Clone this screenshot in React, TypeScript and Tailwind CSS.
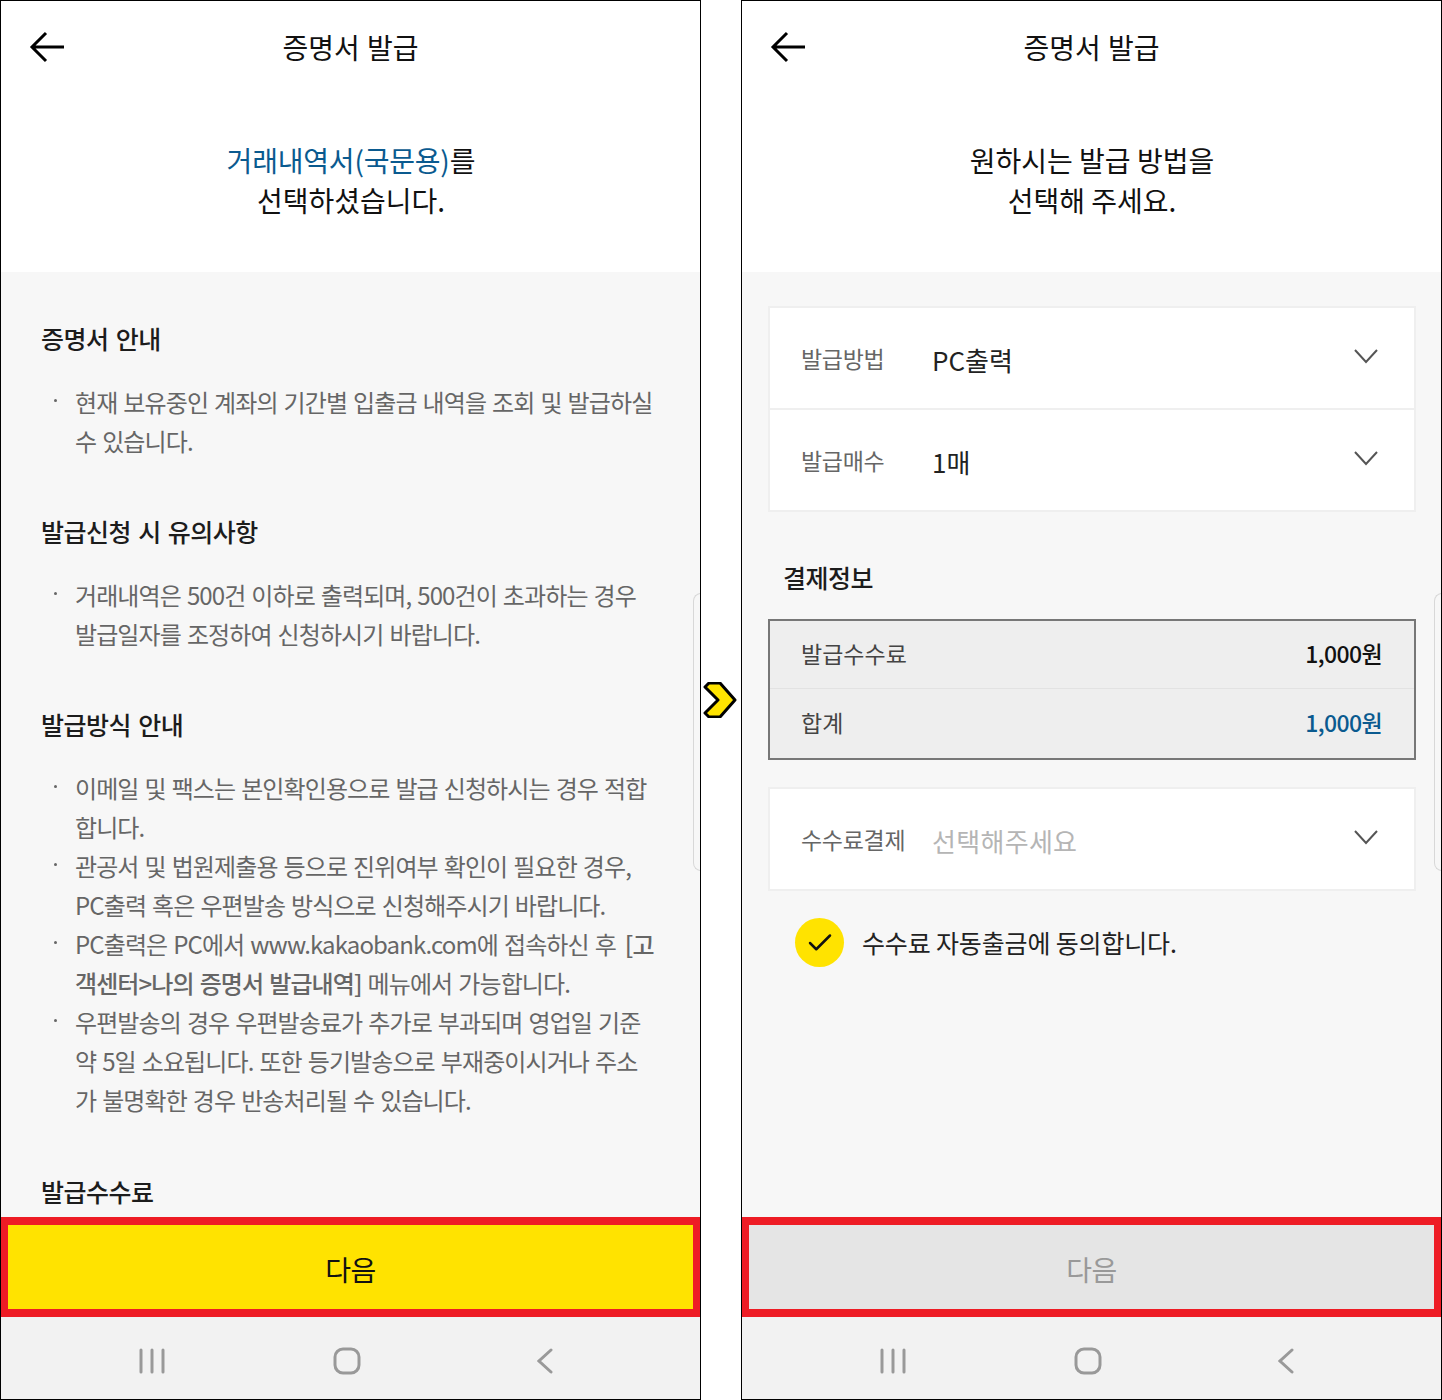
import React from 'react';
import { Check } from 'lucide-react';

const fontStack = 'font-["Noto_Sans_CJK_KR","Noto_Sans",sans-serif]';

const Heading = ({ children }: { children: React.ReactNode }) => (
  <h2 className="text-[25px] leading-[36px] font-medium text-[#1c1c1c] tracking-[-0.5px] [word-spacing:2px]">{children}</h2>
);

const Bullets = ({ items }: { items: React.ReactNode[] }) => (
  <ul className="mt-[26px] text-[24px] leading-[39px] text-[#666] tracking-[-0.9px] [word-spacing:1.5px]">
    {items.map((item, i) => (
      <li key={i} className="relative pl-[34px] pr-[4px]">
        <span className="absolute left-[13px] top-[17px] w-[3px] h-[3px] rounded-full bg-[#666]" />
        {item}
      </li>
    ))}
  </ul>
);

const Chevron = () => (
  <svg width="24" height="15" viewBox="0 0 24 15" fill="none" stroke="#555" strokeWidth="2" className="shrink-0 -mt-[4px]">
    <path d="M1 1l11 12L23 1" />
  </svg>
);

const SelectRow = ({ label, value, muted, last }: { label: string; value: string; muted?: boolean; last?: boolean }) => (
  <div className={`flex items-center pl-[31px] pr-[36px] ${last ? 'h-[100px]' : 'h-[102px] border-b-2 border-[#efefef]'}`}>
    <span className="w-[131px] text-[23px] text-[#666] tracking-[-0.3px] mt-[1px]">{label}</span>
    <span className={`flex-1 text-[26px] mt-[3px] ${muted ? 'text-[#b5b5b5] tracking-[0.3px]' : 'text-[#222]'}`}>{value}</span>
    <Chevron />
  </div>
);

const Phone = ({ children, title, buttonOn }: { children: React.ReactNode; title: React.ReactNode; buttonOn: boolean }) => (
  <div className="relative w-[701px] h-[1400px] border border-black flex flex-col bg-[#f7f7f7] overflow-hidden">
    <div className="h-[271px] bg-white flex flex-col items-center shrink-0">
      <div className="relative w-full h-[92px] flex items-center justify-center">
        <svg width="36" height="32" viewBox="0 0 36 32" fill="none" stroke="#000" strokeWidth="3" className="absolute left-[28px] top-[30px]">
          <path d="M17 2L3 16l14 14M3 16h32" />
        </svg>
        <span className="text-[28px] text-[#111] font-normal [word-spacing:1px]">증명서 발급</span>
      </div>
      <div className="mt-[48px] pl-[1px] text-center text-[28px] leading-[39.5px] text-[#111]">{title}</div>
    </div>
    <div className="flex-1 min-h-0 overflow-hidden">{children}</div>
    <div
      className={`h-[100px] shrink-0 border-x-[7px] border-y-8 border-[#ee1c25] flex items-center justify-center pt-[3px] text-[28px] tracking-[-0.5px] ${
        buttonOn ? 'bg-[#ffe300] text-[#111]' : 'bg-[#e5e5e5] text-[#999]'
      }`}
    >
      다음
    </div>
    <div className="h-[82px] shrink-0 bg-[#f2f2f2] flex items-center justify-center pt-[6px]">
      <div className="w-[414px] -ml-[10px] flex items-center justify-between">
        <svg width="26" height="26" viewBox="0 0 26 26" fill="none" stroke="#999" strokeWidth="3" strokeLinecap="round">
          <path d="M2 2v22M13 2v22M24 2v22" />
        </svg>
        <svg width="28" height="28" viewBox="0 0 28 28" fill="none" stroke="#999" strokeWidth="3" className="mr-[8px]">
          <rect x="2" y="2" width="24" height="24" rx="8" />
        </svg>
        <svg width="16" height="26" viewBox="0 0 16 26" fill="none" stroke="#999" strokeWidth="3" strokeLinecap="round">
          <path d="M14 2L2 13l12 11" />
        </svg>
      </div>
    </div>
    <div className="absolute right-[-1px] top-[592px] w-[8px] h-[278px] rounded-l-[10px] border border-r-0 border-[#d8d8d8]" />
  </div>
);

export default function App() {
  return (
    <div className={`w-[1442px] h-[1400px] bg-white flex justify-between items-start ${fontStack}`}>
      <Phone
        buttonOn
        title={
          <>
            <span className="text-[#0a5a8f] tracking-[-0.2px]">거래내역서(국문용)</span>를
            <br />
            선택하셨습니다.
          </>
        }
      >
        <div className="px-[40px] pt-[48px]">
          <Heading>증명서 안내</Heading>
          <Bullets items={['현재 보유중인 계좌의 기간별 입출금 내역을 조회 및 발급하실 수 있습니다.']} />
          <div className="h-[53px]" />
          <Heading>발급신청 시 유의사항</Heading>
          <Bullets items={['거래내역은 500건 이하로 출력되며, 500건이 초과하는 경우 발급일자를 조정하여 신청하시기 바랍니다.']} />
          <div className="h-[53px]" />
          <Heading>발급방식 안내</Heading>
          <Bullets
            items={[
              '이메일 및 팩스는 본인확인용으로 발급 신청하시는 경우 적합합니다.',
              '관공서 및 법원제출용 등으로 진위여부 확인이 필요한 경우, PC출력 혹은 우편발송 방식으로 신청해주시기 바랍니다.',
              <>
                PC출력은 PC에서 www.kakaobank.com에 접속하신 후{' '}
                <b className="font-medium ml-[3px]">[고객센터&gt;나의 증명서 발급내역]</b> 메뉴에서 가능합니다.
              </>,
              '우편발송의 경우 우편발송료가 추가로 부과되며 영업일 기준 약 5일 소요됩니다. 또한 등기발송으로 부재중이시거나 주소가 불명확한 경우 반송처리될 수 있습니다.',
            ]}
          />
          <div className="h-[54px]" />
          <Heading>발급수수료</Heading>
        </div>
      </Phone>

      <div className="self-center shrink-0">
        <svg width="36" height="36" viewBox="0 0 36 36" className="block">
          <path d="M2 5l4-4h11l15 17-15 17H6l-4-4 13-13z" fill="#ffe300" stroke="#000" strokeWidth="3" strokeLinejoin="round" />
        </svg>
      </div>

      <Phone
        buttonOn={false}
        title={
          <>
            원하시는 발급 방법을
            <br />
            선택해 주세요.
          </>
        }
      >
        <div className="pl-[26px] pr-[25px] pt-[34px]">
          <div className="bg-white border-2 border-[#efefef]">
            <SelectRow label="발급방법" value="PC출력" />
            <SelectRow label="발급매수" value="1매" last />
          </div>
          <h2 className="mt-[47px] ml-[15px] text-[25px] leading-[36px] font-medium text-[#1c1c1c] tracking-[-0.5px]">결제정보</h2>
          <div className="mt-[24px] bg-[#eee] border-2 border-[#777] text-[23px]">
            <div className="h-[68px] flex items-center justify-between px-[31px] pb-[2px] border-b border-[#e2e2e2]">
              <span className="text-[#444]">발급수수료</span>
              <span className="font-medium text-[#111] tracking-[-0.6px] mr-[1px]">1,000원</span>
            </div>
            <div className="h-[69px] flex items-center justify-between px-[31px] pb-[2px]">
              <span className="text-[#444]">합계</span>
              <span className="font-medium text-[#0a5a8f] tracking-[-0.6px] mr-[1px]">1,000원</span>
            </div>
          </div>
          <div className="mt-[27px] bg-white border-2 border-[#efefef]">
            <SelectRow label="수수료결제" value="선택해주세요" muted last />
          </div>
          <div className="mt-[27px] ml-[27px] flex items-center gap-[18px]">
            <span className="w-[49px] h-[49px] rounded-full bg-[#ffe300] flex items-center justify-center">
              <Check className="text-[#111]" size={30} strokeWidth={2} />
            </span>
            <span className="text-[25px] text-[#222] tracking-[-0.15px]">수수료 자동출금에 동의합니다.</span>
          </div>
        </div>
      </Phone>
    </div>
  );
}
